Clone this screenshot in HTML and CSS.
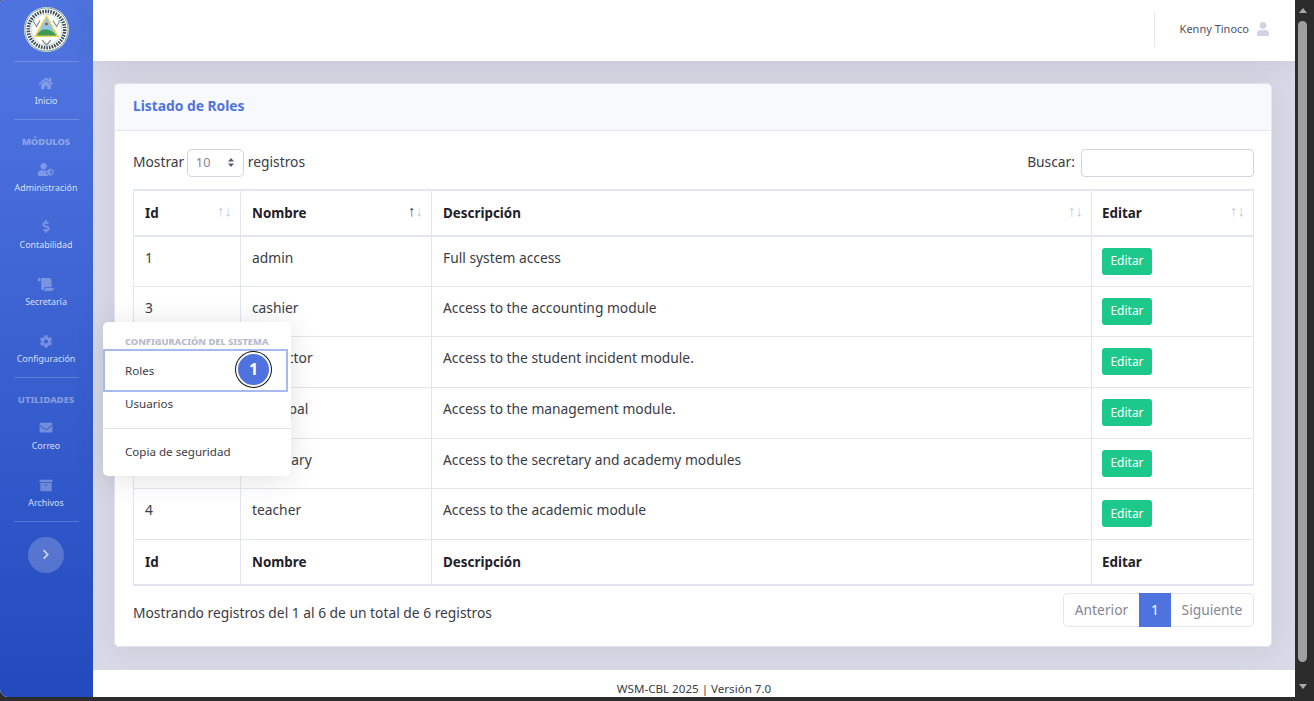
FILE: index.html
```html
<!DOCTYPE html>
<html lang="es">
<head>
<meta charset="utf-8">
<title>Listado de Roles</title>
<link rel="stylesheet" href="styles.css">
</head>
<body>
<div class="frame">
  <div class="app">
    <aside class="sidebar">
      <div class="brand">
        <svg class="logo" viewBox="0 0 45 45">
          <circle cx="22.5" cy="22.5" r="22.5" fill="#fff"/>
          <circle cx="22.5" cy="22.5" r="21.6" fill="none" stroke="#5a8f7c" stroke-width=".9"/>
          <circle cx="22.5" cy="22.5" r="18.2" fill="none" stroke="#3c4a56" stroke-width="3.6" stroke-dasharray="1.6 1.1"/>
          <circle cx="22.5" cy="22.5" r="15.8" fill="#fff"/>
          <circle cx="22.5" cy="22.5" r="15.4" fill="none" stroke="#8fc7b0" stroke-width=".6"/>
          <path d="M22.5 7.5 35 30H10z" fill="#f4d64e"/>
          <path d="M22.5 10.5 32.4 28.5H12.6z" fill="#8cc6e8"/>
          <path d="M12.6 28.5c3-5 6-6.500 10-6s6 1.500 9.800 6z" fill="#3f9a4e"/>
          <circle cx="22.5" cy="17" r="1.300" fill="#c0392b"/>
          <path d="M9 13.500l3.500 6 3.500-6M29 13.500l3.500 6 3.500-6M18 33l4.500 5 4.500-5" fill="none" stroke="#8a8f94" stroke-width="1.200"/>
        </svg>
      </div>
      <hr class="side-rule">
      <a class="nav-item">
        <svg class="nav-icon" viewBox="0 0 576 512"><path d="M280.37 148.26L96 300.11V464a16 16 0 0 0 16 16l112.06-.29a16 16 0 0 0 15.92-16V368a16 16 0 0 1 16-16h64a16 16 0 0 1 16 16v95.64a16 16 0 0 0 16 16.05L464 480a16 16 0 0 0 16-16V300L295.67 148.26a12.19 12.19 0 0 0-15.3 0zM571.6 251.47L488 182.56V44.05a12 12 0 0 0-12-12h-56a12 12 0 0 0-12 12v72.61L318.47 43a48 48 0 0 0-61 0L4.34 251.47a12 12 0 0 0-1.6 16.9l25.5 31A12 12 0 0 0 45.15 301l235.22-193.74a12.19 12.19 0 0 1 15.3 0L530.9 301a12 12 0 0 0 16.9-1.6l25.5-31a12 12 0 0 0-1.7-16.93z"/></svg>
        <span>Inicio</span>
      </a>
      <hr class="side-rule">
      <div class="side-heading">MÓDULOS</div>
      <a class="nav-item">
        <svg class="nav-icon" viewBox="0 0 640 512"><path d="M622.3 271.1l-115.2-45c-4.1-1.6-12.6-3.7-22.2 0l-115.2 45c-10.7 4.2-17.7 14-17.7 24.9 0 111.6 68.7 188.8 132.9 213.9 9.6 3.7 18 1.6 22.2 0C558.4 489.9 640 420.5 640 296c0-10.9-7-20.7-17.7-24.9zM496 462.4V273.3l95.5 37.3c-5.6 87.1-60.9 135.4-95.5 151.8zM224 256c70.7 0 128-57.3 128-128S294.7 0 224 0 96 57.3 96 128s57.3 128 128 128zm96 40c0-2.5.8-4.8 1.1-7.2-2.5-.1-4.9-.8-7.5-.8h-16.7c-22.2 10.2-46.9 16-72.9 16s-50.6-5.8-72.9-16h-16.7C60.2 288 0 348.2 0 422.4V464c0 26.5 21.500 48 48 48h352c6.800 0 13.300-1.500 19.200-4-54-42.900-99.200-116.700-99.200-212z"/></svg>
        <span>Administración</span>
      </a>
      <a class="nav-item">
        <svg class="nav-icon" viewBox="0 0 288 512"><path d="M209.2 233.4l-108-31.6C88.7 198.2 80 186.5 80 173.5c0-16.3 13.2-29.5 29.5-29.5h66.3c12.2 0 24.2 3.7 34.2 10.5 6.1 4.1 14.3 3.1 19.5-2l34.8-34c7.1-6.9 6.1-18.4-1.8-24.5C238 74.8 207.4 64.1 176 64V16c0-8.8-7.2-16-16-16h-32c-8.8 0-16 7.2-16 16v48h-2.5C45.8 64-5.4 118.7.5 183.6c4.2 46.1 39.4 83.6 83.8 96.6l102.5 30c12.5 3.7 21.2 15.3 21.2 28.3 0 16.3-13.2 29.5-29.5 29.5h-66.3C100 368 88 364.3 78 357.5c-6.1-4.1-14.3-3.1-19.5 2l-34.8 34c-7.1 6.9-6.1 18.4 1.8 24.5 24.5 19.2 55.1 29.9 86.5 30v48c0 8.8 7.2 16 16 16h32c8.8 0 16-7.2 16-16v-48.2c46.6-.9 90.3-28.6 105.7-72.7 21.5-61.6-14.6-124.8-72.5-141.7z"/></svg>
        <span>Contabilidad</span>
      </a>
      <a class="nav-item">
        <svg class="nav-icon" viewBox="0 0 640 512"><path d="M48 0C21.53 0 0 21.53 0 48v64c0 8.84 7.16 16 16 16h80V48C96 21.53 74.47 0 48 0zm208 412.57V352h288V96c0-52.94-43.06-96-96-96H111.59C121.74 13.41 128 29.92 128 48v368c0 38.87 34.65 69.65 74.75 63.12C234.22 474 256 444.46 256 412.57zM288 384v32c0 52.93-43.06 96-96 96h336c61.86 0 112-50.14 112-112 0-8.84-7.16-16-16-16H288z"/></svg>
        <span>Secretaría</span>
      </a>
      <a class="nav-item">
        <svg class="nav-icon" viewBox="0 0 512 512"><path d="M487.4 315.7l-42.6-24.6c4.3-23.2 4.3-47 0-70.2l42.6-24.6c4.9-2.8 7.1-8.6 5.5-14-11.1-35.6-30-67.8-54.7-94.6-3.8-4.1-10-5.1-14.8-2.3L380.8 110c-17.9-15.4-38.5-27.3-60.8-35.1V25.8c0-5.6-3.9-10.5-9.4-11.7-36.7-8.2-74.3-7.8-109.2 0-5.5 1.2-9.4 6.1-9.4 11.7V75c-22.2 7.9-42.8 19.8-60.8 35.1L88.7 85.5c-4.9-2.8-11-1.9-14.8 2.3-24.7 26.7-43.6 58.9-54.7 94.6-1.7 5.4.6 11.2 5.5 14L67.3 221c-4.3 23.2-4.3 47 0 70.2l-42.6 24.6c-4.9 2.8-7.1 8.6-5.5 14 11.1 35.6 30 67.8 54.7 94.6 3.8 4.1 10 5.1 14.8 2.3l42.6-24.6c17.9 15.4 38.5 27.3 60.8 35.1v49.2c0 5.6 3.9 10.5 9.4 11.7 36.7 8.2 74.3 7.8 109.2 0 5.5-1.2 9.4-6.1 9.4-11.7v-49.2c22.2-7.9 42.8-19.8 60.8-35.1l42.6 24.6c4.9 2.8 11 1.9 14.8-2.3 24.7-26.7 43.6-58.9 54.7-94.6 1.5-5.5-.7-11.3-5.6-14.1zM256 336c-44.1 0-80-35.9-80-80s35.9-80 80-80 80 35.9 80 80-35.9 80-80 80z"/></svg>
        <span>Configuración</span>
      </a>
      <hr class="side-rule">
      <div class="side-heading">UTILIDADES</div>
      <a class="nav-item">
        <svg class="nav-icon" viewBox="0 0 512 512"><path d="M502.3 190.8c3.9-3.1 9.7-.2 9.7 4.7V400c0 26.5-21.5 48-48 48H48c-26.5 0-48-21.5-48-48V195.6c0-5 5.7-7.8 9.7-4.7 22.4 17.4 52.1 39.5 154.1 113.6 21.1 15.4 56.7 47.8 92.2 47.6 35.7.3 72-32.8 92.3-47.6 102-74.1 131.6-96.3 154-113.7zM256 320c23.2.4 56.6-29.2 73.4-41.4 132.7-96.3 142.8-104.7 173.4-128.7 5.8-4.5 9.2-11.5 9.2-18.9v-19c0-26.5-21.5-48-48-48H48C21.5 64 0 85.5 0 112v19c0 7.4 3.4 14.3 9.2 18.9 30.6 23.9 40.7 32.4 173.4 128.7 16.8 12.2 50.2 41.8 73.4 41.4z"/></svg>
        <span>Correo</span>
      </a>
      <a class="nav-item">
        <svg class="nav-icon" viewBox="0 0 512 512"><path d="M32 448c0 17.7 14.3 32 32 32h384c17.7 0 32-14.3 32-32V160H32v288zm160-212c0-6.6 5.4-12 12-12h104c6.6 0 12 5.4 12 12v8c0 6.6-5.4 12-12 12H204c-6.6 0-12-5.4-12-12v-8zM480 32H32C14.3 32 0 46.3 0 64v48c0 8.8 7.2 16 16 16h480c8.8 0 16-7.2 16-16V64c0-17.7-14.3-32-32-32z"/></svg>
        <span>Archivos</span>
      </a>
      <hr class="side-rule">
      <button class="toggler" type="button" aria-label="Expandir">
        <svg viewBox="0 0 320 512"><path d="M285.476 272.971L91.132 467.314c-9.373 9.373-24.569 9.373-33.941 0l-22.667-22.667c-9.357-9.357-9.375-24.522-.04-33.901L188.505 256 34.484 101.255c-9.335-9.379-9.317-24.544.04-33.901l22.667-22.667c9.373-9.373 24.569-9.373 33.941 0L285.475 239.03c9.373 9.372 9.373 24.568.001 33.941z"/></svg>
      </button>
    </aside>

    <div class="content">
      <header class="topbar">
        <div class="top-rule"></div>
        <span class="user-name">Kenny Tinoco</span>
        <svg class="user-icon" viewBox="0 0 448 512"><path d="M224 256c70.7 0 128-57.3 128-128S294.7 0 224 0 96 57.3 96 128s57.3 128 128 128zm89.6 32h-16.7c-22.2 10.2-46.9 16-72.9 16s-50.6-5.8-72.9-16h-16.7C60.2 288 0 348.2 0 422.4V464c0 26.5 21.5 48 48 48h352c26.5 0 48-21.5 48-48v-41.6c0-74.2-60.2-134.4-134.4-134.4z"/></svg>
      </header>

      <main class="main">
        <section class="card">
          <h1 class="card-header">Listado de Roles</h1>
          <div class="card-body">
            <div class="controls">
              <div class="length">
                <span>Mostrar</span>
                <span class="select"><span>10</span>
                  <svg viewBox="0 0 8 12"><path d="M4 1 7.300 5H.7zM4 11 .7 7h6.600z"/></svg>
                </span>
                <span>registros</span>
              </div>
              <div class="search">
                <span>Buscar:</span>
                <input class="search-input" type="text" aria-label="Buscar">
              </div>
            </div>

            <table class="roles">
              <colgroup>
                <col class="c-id"><col class="c-name"><col class="c-desc"><col class="c-edit">
              </colgroup>
              <thead>
                <tr>
                  <th>Id<span class="sort"><i>↑</i><i>↓</i></span></th>
                  <th>Nombre<span class="sort"><i class="on">↑</i><i>↓</i></span></th>
                  <th>Descripción<span class="sort"><i>↑</i><i>↓</i></span></th>
                  <th>Editar<span class="sort"><i>↑</i><i>↓</i></span></th>
                </tr>
              </thead>
              <tbody>
                <tr><td>1</td><td>admin</td><td>Full system access</td><td><button class="btn" type="button">Editar</button></td></tr>
                <tr><td>3</td><td>cashier</td><td>Access to the accounting module</td><td><button class="btn" type="button">Editar</button></td></tr>
                <tr><td>5</td><td>inspector</td><td>Access to the student incident module.</td><td><button class="btn" type="button">Editar</button></td></tr>
                <tr><td>6</td><td>principal</td><td>Access to the management module.</td><td><button class="btn" type="button">Editar</button></td></tr>
                <tr><td>2</td><td>secretary</td><td>Access to the secretary and academy modules</td><td><button class="btn" type="button">Editar</button></td></tr>
                <tr><td>4</td><td>teacher</td><td>Access to the academic module</td><td><button class="btn" type="button">Editar</button></td></tr>
              </tbody>
              <tfoot>
                <tr><th>Id</th><th>Nombre</th><th>Descripción</th><th>Editar</th></tr>
              </tfoot>
            </table>

            <div class="table-foot">
              <div class="info">Mostrando registros del 1 al 6 de un total de 6 registros</div>
              <div class="pager">
                <span class="page first">Anterior</span>
                <span class="page active">1</span>
                <span class="page last">Siguiente</span>
              </div>
            </div>
          </div>
        </section>
      </main>

      <footer class="footer">WSM-CBL 2025 | Versión 7.0</footer>
    </div>

    <div class="popover">
      <div class="pop-heading">CONFIGURACIÓN DEL SISTEMA</div>
      <a class="pop-item focus">Roles<span class="step">1</span></a>
      <a class="pop-item">Usuarios</a>
      <div class="pop-rule"></div>
      <a class="pop-item">Copia de seguridad</a>
    </div>
  </div>

  <div class="scrollbar">
    <span class="arrow up"></span>
    <div class="track"><div class="thumb"></div></div>
    <span class="arrow down"></span>
  </div>
</div>
</body>
</html>
```

FILE: styles.css
```css
* { box-sizing: border-box; }
html, body { margin: 0; height: 100%; overflow: hidden; }
body {
  background: #2c2c2c;
  font-family: "Noto Sans", "Open Sans", "Liberation Sans", sans-serif;
  font-size: 13.8px;
  line-height: 1.5;
  color: #3a3b45;
}
.frame { display: flex; height: 697px; width: 1310px; }
.app {
  position: relative;
  display: flex;
  flex: 0 0 1295px;
  height: 697px;
  overflow: hidden;
  border-radius: 3px 0 0 8px;
  background: #fff;
}

/* sidebar */
.sidebar {
  flex: 0 0 93px;
  display: flex;
  flex-direction: column;
  align-items: center;
  padding-right: 1px;
  background: linear-gradient(180deg, #4e73df 10%, #224abe 100%);
  color: rgba(255, 255, 255, .8);
}
.brand { height: 61px; width: 100%; display: flex; justify-content: center; padding-top: 7px; flex: none; }
.logo { width: 45px; height: 45px; display: block; }
.side-rule { width: 65px; height: 1px; margin: 0; border: 0; background: rgba(255, 255, 255, .2); flex: none; }
.nav-item {
  width: 100%;
  height: 57.2px;
  flex: none;
  display: flex;
  flex-direction: column;
  align-items: center;
  padding-top: 14.5px;
  font-size: 8.9px;
  line-height: 14px;
  white-space: nowrap;
}
.nav-icon { height: 13px; width: 16px; fill: rgba(255, 255, 255, .3); margin-bottom: 4.5px; flex: none; }
.side-heading {
  flex: none;
  height: 28.5px;
  padding-top: 14.5px;
  font-size: 9.4px;
  line-height: 14px;
  font-weight: 800;
  color: rgba(255, 255, 255, .4);
}
.toggler {
  width: 36px;
  height: 36px;
  margin-top: 14.6px;
  flex: none;
  padding: 0;
  border: 0;
  border-radius: 50%;
  background: rgba(255, 255, 255, .2);
  display: flex;
  align-items: center;
  justify-content: center;
}
.toggler svg { width: 8px; height: 11px; fill: rgba(255, 255, 255, .7); }

/* content */
.content { flex: 1; min-width: 0; display: flex; flex-direction: column; background: #d8dbe7; }
.topbar {
  flex: 0 0 61px;
  position: relative;
  display: flex;
  align-items: center;
  justify-content: flex-end;
  padding-right: 25px;
  background: #fff;
  box-shadow: 0 2.4px 28px rgba(58, 59, 69, .12);
}
.top-rule { width: 1px; height: 35px; background: #e3e6f0; margin-right: 25px; margin-top: -2px; }
.user-name { font-size: 11px; color: #4f515e; margin-top: -3px; }
.user-icon { width: 14px; height: 14px; fill: #d1d3e2; margin-left: 7px; margin-top: -3px; }
.main { flex: 1; padding: 22px 23px 23px 21px; min-height: 0; }
.card {
  height: 564px;
  background: #fff;
  border: 1px solid #e3e6f0;
  border-radius: 5px;
  box-shadow: 0 2.4px 28px rgba(58, 59, 69, .1);
}
.card-header {
  margin: 0;
  height: 47px;
  padding: 0 18px 2px;
  display: flex;
  align-items: center;
  font-size: 13.8px;
  font-weight: 700;
  color: #4e73df;
  background: #f8f9fc;
  border-bottom: 1px solid #e3e6f0;
  border-radius: 5px 5px 0 0;
}
.card-body { padding: 18px 17px 0 18px; }
.controls { display: flex; justify-content: space-between; height: 40px; }
.length, .search { display: flex; align-items: flex-start; height: 28px; line-height: 25px; }
.length { gap: 4px; }
.length > span:first-child { margin-right: -1.5px; }
.search { gap: 6px; }
.select {
  width: 57px;
  height: 28px;
  border: 1px solid #d1d3e2;
  border-radius: 5px;
  padding: 0 8px 1px;
  color: #858796;
  display: flex;
  align-items: center;
  justify-content: space-between;
  font-size: 12.8px;
}
.select svg { width: 8px; height: 11px; fill: #5a5c69; }
.search-input {
  width: 173px;
  height: 28px;
  border: 1px solid #d1d3e2;
  border-radius: 4px;
  background: #fff;
  padding: 0 8px;
  display: block;
}

/* table */
.roles {
  width: 1120px;
  table-layout: fixed;
  border-collapse: collapse;
  border: 1px solid #e3e6f0;
  border-top-width: 2px;
  border-bottom-width: 2px;
}
.c-id { width: 107px; }
.c-name { width: 191px; }
.c-desc { width: 660px; }
.c-edit { width: 162px; }
.roles th, .roles td {
  border: 1px solid #e3e6f0;
  padding: 0 11px;
  text-align: left;
  position: relative;
}
.roles th:last-child, .roles td:last-child { padding-left: 10px; }
.roles td { vertical-align: top; padding-top: 11px; }
.roles tbody tr { height: 50.7px; }
.roles thead tr { height: 45.5px; }
.roles tfoot tr { height: 45.3px; }
.roles thead th { border-bottom-width: 2px; }
.roles tfoot th { border-bottom: 0; }
.roles th { font-size: 13.4px; font-weight: 700; color: #1f2028; }
.sort {
  position: absolute;
  right: 8px;
  top: 11px;
  font-family: "Liberation Sans", sans-serif;
  font-size: 15px;
  font-weight: 400;
  display: flex;
  line-height: 18px;
}
.sort i { font-style: normal; color: #c7c9d3; }
.sort i.on { color: #4a4b55; }
.btn {
  display: block;
  width: 50px;
  height: 27px;
  padding: 0;
  border: 0;
  border-radius: 3px;
  background: #1cc88a;
  color: #fff;
  font: inherit;
  font-size: 12px;
}
.table-foot { display: flex; justify-content: space-between; align-items: flex-start; padding-top: 7.5px; }
.info { padding-top: 9.5px; }
.pager { display: flex; height: 34px; color: #858796; }
.page { display: flex; align-items: center; justify-content: center; border: 1px solid #e3e6f0; }
.first { width: 76px; border-right: 0; border-radius: 5px 0 0 5px; }
.active { width: 32px; background: #4e73df; border-color: #4e73df; color: #fff; }
.last { width: 83px; border-left: 0; border-radius: 0 5px 5px 0; }

.footer {
  flex: 0 0 27px;
  background: #fff;
  text-align: center;
  font-size: 11.6px;
  line-height: 38px;
  color: #3a3b45;
  overflow: hidden;
}

/* popover */
.popover {
  position: absolute;
  left: 103px;
  top: 322px;
  width: 188px;
  height: 154px;
  padding-top: 12px;
  background: #fff;
  border-radius: 5px;
  box-shadow: 0 2.4px 28px rgba(58, 59, 69, .15);
  font-size: 11.6px;
  color: #3a3b45;
}
.pop-heading { padding-left: 22px; height: 15px; font-size: 9.3px; line-height: 15px; font-weight: 800; color: #b7b9cc; white-space: nowrap; }
.pop-item { display: block; height: 33px; line-height: 33px; padding-left: 22px; position: relative; }
.pop-item.focus { width: 185px; height: 43px; line-height: 39px; border: 2px solid #a7b9ef; padding-left: 20px; margin-bottom: -5px; }
.pop-rule { height: 1px; background: #e3e6f0; margin: 8px 0 6px; }
.step {
  position: absolute;
  left: 131px;
  top: 1px;
  width: 35px;
  height: 35px;
  border-radius: 50%;
  background: #4e73df;
  color: #fff;
  font-size: 16px;
  font-weight: 700;
  line-height: 31px;
  text-align: center;
  border: 2px solid #fff;
  box-shadow: 0 0 0 1px #111;
}

/* scrollbar */
.scrollbar { flex: 0 0 15px; display: flex; flex-direction: column; align-items: center; }
.track { flex: 1; width: 100%; padding: 0 3px; }
.thumb { width: 9px; height: 641px; background: #9f9f9f; border-radius: 5px; margin-top: 4px; }
.arrow { width: 0; height: 0; border-left: 4px solid transparent; border-right: 4px solid transparent; flex: none; }
.up { border-bottom: 5px solid #a8a8a8; margin-top: 8px; margin-bottom: 4px; }
.down { border-top: 5px solid #a8a8a8; margin-bottom: 8px; }
```
